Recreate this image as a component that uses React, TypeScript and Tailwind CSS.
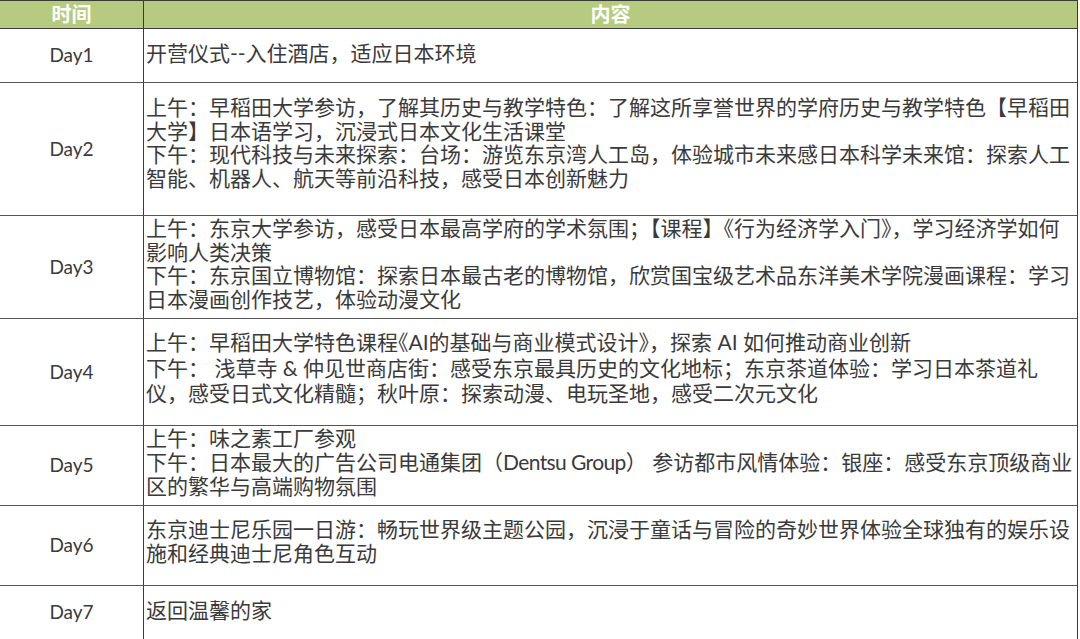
import React from 'react';

/**
 * 日本研学行程表
 */

type Row = {
  day: string;
  /** 行高（含下边框） */
  h: string;
  /** 内容上边距 */
  pt: string;
  lead: string;
  lines: React.ReactNode[];
};

// 书名号按半宽显示，和原表一致
const Q = ({ c }: { c: string }) => <span className="[font-feature-settings:'halt']">{c}</span>;

const rows: Row[] = [
  {
    day: 'Day1',
    h: 'h-[54px]',
    pt: 'pt-[12px]',
    lead: 'leading-[23.5px]',
    lines: ['开营仪式--入住酒店，适应日本环境'],
  },
  {
    day: 'Day2',
    h: 'h-[133px]',
    pt: 'pt-[12px]',
    lead: 'leading-[23.5px]',
    lines: [
      '上午：早稻田大学参访，了解其历史与教学特色：了解这所享誉世界的学府历史与教学特色【早稻田',
      '大学】日本语学习，沉浸式日本文化生活课堂',
      '下午：现代科技与未来探索：台场：游览东京湾人工岛，体验城市未来感日本科学未来馆：探索人工',
      '智能、机器人、航天等前沿科技，感受日本创新魅力',
    ],
  },
  {
    day: 'Day3',
    h: 'h-[103px]',
    pt: 'pt-0',
    lead: 'leading-[23.5px]',
    lines: [
      <>
        上午：东京大学参访，感受日本最高学府的学术氛围；【课程】<Q c="《" />行为经济学入门<Q c="》" />，学习经济学如何
      </>,
      '影响人类决策',
      '下午：东京国立博物馆：探索日本最古老的博物馆，欣赏国宝级艺术品东洋美术学院漫画课程：学习',
      '日本漫画创作技艺，体验动漫文化',
    ],
  },
  {
    day: 'Day4',
    h: 'h-[107px]',
    pt: 'pt-[10px]',
    lead: 'leading-[25.5px]',
    lines: [
      <>
        上午：早稻田大学特色课程<Q c="《" />AI的基础与商业模式设计<Q c="》" />，探索 AI 如何推动商业创新
      </>,
      '下午： 浅草寺 & 仲见世商店街：感受东京最具历史的文化地标；东京茶道体验：学习日本茶道礼',
      '仪，感受日式文化精髓；秋叶原：探索动漫、电玩圣地，感受二次元文化',
    ],
  },
  {
    day: 'Day5',
    h: 'h-[80px]',
    pt: 'pt-0',
    lead: 'leading-[24px]',
    lines: [
      '上午：味之素工厂参观',
      <>
        下午：日本最大的广告公司电通集团（<span className="tracking-[-0.6px]">Dentsu Group</span>） 参访都市风情体验：银座：感受东京顶级商业
      </>,
      '区的繁华与高端购物氛围',
    ],
  },
  {
    day: 'Day6',
    h: 'h-[80px]',
    pt: 'pt-[11px]',
    lead: 'leading-[23.5px]',
    lines: [
      '东京迪士尼乐园一日游：畅玩世界级主题公园，沉浸于童话与冒险的奇妙世界体验全球独有的娱乐设',
      '施和经典迪士尼角色互动',
    ],
  },
];

export default function App() {
  return (
    <div className="w-[1080px] h-[639px] overflow-hidden bg-white font-['Lato','Noto_Sans_CJK_SC',sans-serif] text-[#3a3a3a]">
      <div className="w-[1078px] border-r border-[#3a3a3a]">
        {/* 表头 */}
        <div className="flex h-[29px] border-y border-[#3a3a3a] bg-[#b6cb80] text-white font-bold text-[20px] leading-[26px]">
          <div className="w-[144px] shrink-0 border-r border-[#3a3a3a] text-center">时间</div>
          <div className="flex-1 text-center">内容</div>
        </div>

        {rows.map((r) => (
          <div key={r.day} className={`flex ${r.h} border-b border-[#555]`}>
            <div className="w-[144px] shrink-0 border-r border-[#3a3a3a] flex items-center justify-center text-[19px]">
              {r.day}
            </div>
            <div className={`flex-1 pl-[2px] ${r.pt} ${r.lead} text-[21px] whitespace-nowrap`}>
              {r.lines.map((l, i) => (
                <div key={i}>{l}</div>
              ))}
            </div>
          </div>
        ))}

        {/* Day7 延伸到底部 */}
        <div className="flex h-[60px]">
          <div className="w-[144px] shrink-0 border-r border-[#3a3a3a] flex items-center justify-center text-[19px] pb-[8px]">
            Day7
          </div>
          <div className="flex-1 pl-[2px] pt-[12px] leading-[23.5px] text-[21px]">返回温馨的家</div>
        </div>
      </div>
    </div>
  );
}
